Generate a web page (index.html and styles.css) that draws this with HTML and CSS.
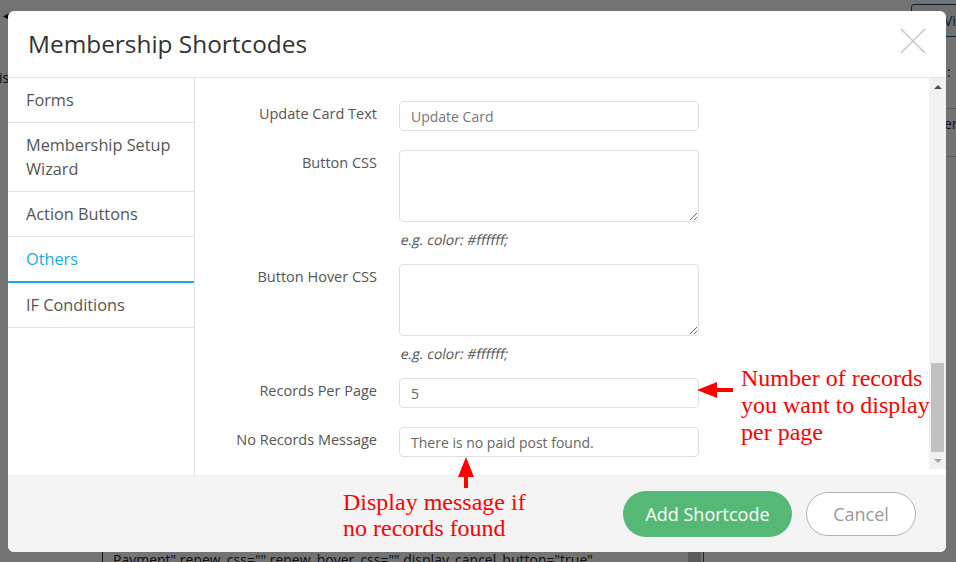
FILE: index.html
```html
<!DOCTYPE html>
<html lang="en">
<head>
  <meta charset="UTF-8" />
  <meta name="viewport" content="width=device-width, initial-scale=1" />
  <title>Membership Shortcodes</title>
  <link rel="stylesheet" href="styles.css">
</head>
<body>

  <!-- page behind the dialog -->
  <div class="page">
    <span class="page-back">&#9664;</span>
    <button class="page-view">View</button>
    <span class="page-crumb">is</span>
    <div class="page-side">
      <span class="page-colon">:</span>
      <div class="page-cell">er</div>
      <div class="page-cell"></div>
    </div>
    <div class="page-code">
      <span>Payment" renew_css="" renew_hover_css="" display_cancel_button="true"</span>
      <span class="page-code-bar"></span>
    </div>
  </div>
  <div class="backdrop"></div>

  <div class="modal">
    <div class="modal-header">
      <h2 class="modal-title">Membership Shortcodes</h2>
      <button class="close-btn" aria-label="Close">
        <svg width="28" height="28" viewBox="0 0 28 28">
          <path d="M2 2 L26 26 M26 2 L2 26" stroke="#c9c9c9" stroke-width="1.6" fill="none" />
        </svg>
      </button>
    </div>

    <div class="modal-body">
      <ul class="tabs">
        <li class="tab">Forms</li>
        <li class="tab">Membership Setup Wizard</li>
        <li class="tab">Action Buttons</li>
        <li class="tab active">Others</li>
        <li class="tab">IF Conditions</li>
      </ul>

      <div class="content">
        <div class="pane">
          <form class="fields">
            <div class="row">
              <label for="cardText">Update Card Text</label>
              <input class="input" type="text" id="cardText" placeholder="Update Card" />
            </div>

            <div class="row row-area">
              <label for="btnCss">Button CSS</label>
              <div>
                <textarea class="input area" id="btnCss"></textarea>
                <p class="help"><span>e.g. color: #ffffff;</span></p>
              </div>
            </div>

            <div class="row row-area">
              <label for="btnHover">Button Hover CSS</label>
              <div>
                <textarea class="input area" id="btnHover"></textarea>
                <p class="help"><span>e.g. color: #ffffff;</span></p>
              </div>
            </div>

            <div class="row">
              <label for="perPage">Records Per Page</label>
              <input class="input" type="text" id="perPage" value="5" />
            </div>

            <div class="row">
              <label for="noRecords">No Records Message</label>
              <input class="input" type="text" id="noRecords" value="There is no paid post found." />
            </div>
          </form>

          <div class="scrollbar">
            <span class="sb-btn"><i class="sb-up"></i></span>
            <span class="sb-track"></span>
            <span class="sb-thumb"></span>
            <span class="sb-btn"><i class="sb-down"></i></span>
          </div>
        </div>
      </div>
    </div>

    <div class="modal-footer">
      <button class="btn-add">Add Shortcode</button>
      <button class="btn-cancel">Cancel</button>
    </div>
  </div>

  <!-- annotations drawn over the screenshot -->
  <svg class="arrow arrow-left" width="38" height="20" viewBox="0 0 38 20">
    <polygon points="0,10 20,2 20,18" fill="#ff0000" />
    <rect x="19" y="8" width="17" height="4" fill="#ff0000" />
  </svg>
  <p class="note note-records">Number of records<br>you want to display<br>per page</p>

  <svg class="arrow arrow-up" width="18" height="32" viewBox="0 0 18 32">
    <polygon points="9,0 1,20 17,20" fill="#ff0000" />
    <rect x="7" y="19" width="4" height="12" fill="#ff0000" />
  </svg>
  <p class="note note-message">Display message if<br>no records found</p>

</body>
</html>
```

FILE: styles.css
```css
body {
  margin: 0;
  width: 956px;
  height: 562px;
  overflow: hidden;
  position: relative;
  font-family: 'Open Sans', 'Liberation Sans', sans-serif;
  background-color: #fff;
  color: #333;
}

/* background page */
.page {
  position: absolute;
  inset: 0;
  font-size: 14px;
  color: #222;
}
.page-back {
  position: absolute;
  left: 3px;
  top: 8px;
  font-size: 10px;
  color: #000;
}
.page-view {
  position: absolute;
  left: 911px;
  top: 4px;
  width: 80px;
  height: 33px;
  padding: 0 0 0 32px;
  border: 1px solid #0a4b78;
  border-radius: 3px;
  background: #f6f7f7;
  color: #0a4b78;
  font: 14px 'Open Sans', sans-serif;
  text-align: left;
}
.page-crumb {
  position: absolute;
  left: -1px;
  top: 68px;
}
.page-side {
  position: absolute;
  left: 940px;
  top: 62px;
  width: 30px;
}
.page-colon {
  display: block;
  height: 46px;
  padding-left: 7px;
}
.page-cell {
  height: 47px;
  border-top: 1px solid #c3c4c7;
  padding-left: 4px;
  line-height: 30px;
}
.page-code {
  position: absolute;
  left: 102px;
  top: 548px;
  width: 602px;
  height: 40px;
  border-left: 1px solid #333;
  border-right: 1px solid #555;
  padding-left: 10px;
  box-sizing: border-box;
  line-height: 24px;
  white-space: nowrap;
}
.page-code-bar {
  position: absolute;
  right: 2px;
  top: 0;
  width: 13px;
  height: 40px;
  background: #c8c8c8;
}
.backdrop {
  position: absolute;
  inset: 0;
  background-color: rgba(0, 0, 0, 0.55);
}

/* dialog */
.modal {
  position: absolute;
  left: 8px;
  top: 11px;
  width: 938px;
  height: 541px;
  background: #fff;
  border-radius: 6px;
  overflow: hidden;
  display: flex;
  flex-direction: column;
}
.modal-header {
  height: 67px;
  flex-shrink: 0;
  box-sizing: border-box;
  border-bottom: 1px solid #e5e5e5;
  display: flex;
  align-items: center;
  justify-content: space-between;
  padding: 0 19px 1px 20px;
}
.modal-title {
  margin: 0;
  font-size: 24.4px;
  font-weight: normal;
  color: #333;
}
.close-btn {
  border: none;
  background: none;
  padding: 0;
  width: 28px;
  height: 28px;
  margin-bottom: 5px;
  cursor: pointer;
}
.close-btn svg {
  display: block;
}
.modal-body {
  display: flex;
  height: 397px;
  flex-shrink: 0;
}
.tabs {
  list-style: none;
  margin: 0;
  padding: 0;
  width: 186px;
  border-right: 1px solid #dfe3e8;
}
.tab {
  padding: 10px 18px;
  font-size: 16.3px;
  line-height: 24px;
  color: #555;
  border-bottom: 1px solid #dfe3e8;
}
.tab.active {
  color: #19a9e3;
  border-bottom: 2px solid #19a9e3;
}
.content {
  flex: 1;
}
.pane {
  height: 391px;
  display: flex;
}
.fields {
  flex: 1;
  margin: 0;
  padding-top: 23px;
}
.row {
  display: grid;
  grid-template-columns: 182px 300px;
  column-gap: 22px;
  margin-bottom: 19px;
}
.row-area {
  margin-bottom: 14px;
}
.row label {
  text-align: right;
  font-size: 14.5px;
  line-height: 20px;
  padding-top: 3px;
  color: #555;
}
.input {
  display: block;
  width: 100%;
  height: 30px;
  box-sizing: border-box;
  border: 1px solid #dbe0e7;
  border-radius: 4px;
  padding: 0 11px;
  font: 14px 'Open Sans', sans-serif;
  color: #666;
  background: #fff;
}
.input::placeholder {
  color: #777;
}
.area {
  height: 72px;
  resize: vertical;
}
.help {
  margin: 8px 0 0;
  font-size: 14px;
  line-height: 20px;
  color: #555;
}
/* slanted regular face, like a browser-made italic */
.help span {
  display: inline-block;
  transform: skewX(-11deg);
  transform-origin: left bottom;
}

/* scrollbar of the pane */
.scrollbar {
  width: 17px;
  background: #f1f1f1;
  display: flex;
  flex-direction: column;
}
.sb-btn {
  height: 17px;
  display: flex;
  align-items: center;
  justify-content: center;
}
.sb-track {
  flex: 1;
}
.sb-thumb {
  height: 89px;
  margin: 0 2px;
  background: #c1c1c1;
}
.sb-up {
  border-left: 4px solid transparent;
  border-right: 4px solid transparent;
  border-bottom: 4px solid #505050;
}
.sb-down {
  border-left: 4px solid transparent;
  border-right: 4px solid transparent;
  border-top: 4px solid #a3a3a3;
}

.modal-footer {
  flex: 1;
  background: #f4f4f4;
  display: flex;
  align-items: center;
  justify-content: flex-end;
  gap: 14px;
  padding-right: 30px;
}
.btn-add {
  width: 169px;
  height: 46px;
  border: none;
  border-radius: 23px;
  background-color: #55b975;
  color: #fff;
  font: 18px 'Open Sans', sans-serif;
  cursor: pointer;
}
.btn-cancel {
  width: 110px;
  height: 44px;
  border: 1px solid #b3b3b3;
  border-radius: 22px;
  background: #fff;
  color: #999;
  font: 18px 'Open Sans', sans-serif;
  cursor: pointer;
}

/* red notes */
.arrow {
  position: absolute;
}
.arrow-left {
  left: 697px;
  top: 380px;
}
.arrow-up {
  left: 457px;
  top: 457px;
}
.note {
  position: absolute;
  margin: 0;
  font-family: 'Liberation Serif', serif;
  font-size: 24px;
  color: #ff0000;
  white-space: nowrap;
}
.note-records {
  left: 741px;
  top: 365px;
  line-height: 27px;
}
.note-message {
  left: 343px;
  top: 489px;
  line-height: 26px;
}
```
